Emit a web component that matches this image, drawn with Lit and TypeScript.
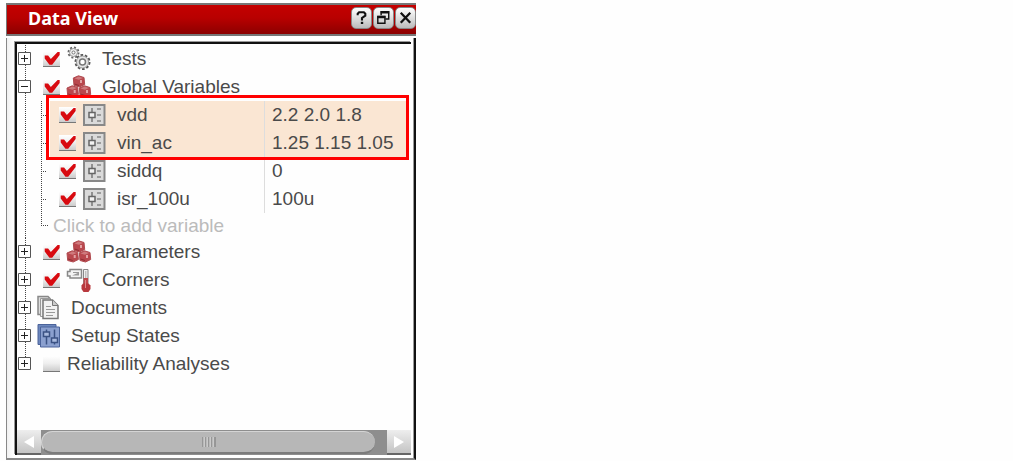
import { LitElement, html, svg, css, nothing } from "lit";
import { customElement, state } from "lit/decorators.js";
import { classMap } from "lit/directives/class-map.js";

interface TreeItem {
  id: string;
  label: string;
  icon?: "gears" | "cubes" | "corners" | "docs" | "states";
  checked?: boolean;
  last?: boolean;
}

interface Variable {
  name: string;
  value: string;
}

const swept: Variable[] = [
  { name: "vdd", value: "2.2 2.0 1.8" },
  { name: "vin_ac", value: "1.25 1.15 1.05" },
];

const fixed: Variable[] = [
  { name: "siddq", value: "0" },
  { name: "isr_100u", value: "100u" },
];

const cube = (x: number, y: number) => svg`
  <g transform="translate(${x} ${y})">
    <path d="M.8 3 6 .8 11.500 2.500l.7 7L7 12 1.500 10.500z" fill="#b9474d" stroke="#b04b50"/>
    <path d="M2 3.400 6.200 1.500l4.400 1.400-4.200 1.800z" fill="#cf7a7d"/>
    <path d="M8.500 5v3" stroke="#e3a3a5" stroke-width="2"/>
    <path d="M2 9l4.500 1.500" stroke="#8f2c32"/>
  </g>`;

const icons = {
  gears: () => html`<svg class="icon" width="26" height="26" viewBox="0 0 26 26" fill="none">
    <circle cx="7.500" cy="6.500" r="5" stroke="#666" stroke-width="2" stroke-dasharray="2 1.900"/>
    <circle cx="7.500" cy="6.500" r="4" fill="#eee" stroke="#999"/>
    <circle cx="7.500" cy="6.500" r="1.500" fill="#fff" stroke="#777"/>
    <circle cx="16.500" cy="16" r="7" stroke="#555" stroke-width="2" stroke-dasharray="2.600 1.800"/>
    <circle cx="16.500" cy="16" r="6" fill="#e4e4e4" stroke="#999"/>
    <circle cx="16.500" cy="16" r="3" fill="#fff" stroke="#777" stroke-width="1.500"/>
  </svg>`,
  cubes: () => html`<svg class="icon" width="26" height="26" viewBox="0 0 26 26" fill="none">
    ${cube(6.5, 1)}${cube(0.2, 11)}${cube(12.5, 11)}
  </svg>`,
  corners: () => html`<svg class="icon" width="26" height="26" viewBox="0 0 26 26" fill="none">
    <path d="M4 2.500h11.500v8.500H4V9H1.500V4.500H4z" fill="#f4f4f4" stroke="#888" stroke-width="1.500"/>
    <path d="M13 5.500v3H6z" fill="#999"/><path d="M7 5.500h6" stroke="#999"/>
    <path d="M17.500 2.500h4.500v15h-4.500z" fill="#f0f0f0" stroke="#888"/>
    <path d="M19.800 4v7" stroke="#aaa"/>
    <path d="M19.800 11v8" stroke="#c0484c" stroke-width="4.500"/>
    <path d="M17 16.500h5.500l2 2v3.500L22.500 25h-5l-2-3v-3.500z" fill="#b8383d"/>
    <path d="M19.500 13v8" stroke="#dd8a8c"/>
  </svg>`,
  docs: () => html`<svg class="icon" width="24" height="26" viewBox="0 0 24 26" fill="none">
    <path d="M1 1.500h10l2 2v16H1z" fill="#ddd" stroke="#888" stroke-width="1.500"/>
    <path d="M3.500 3.500h10v18h-10z" fill="#eee" stroke="#999"/>
    <path d="M6 5h9.500l5.500 5.500V23.500H6z" fill="#f2f2f2" stroke="#777" stroke-width="1.500"/>
    <path d="M15.500 5v5.500H21" fill="#ccc" stroke="#777"/>
    <path d="M9 11.500h5M9 14.500h9M9 17.500h9M9 20.500h7" stroke="#999"/>
  </svg>`,
  states: () => html`<svg class="icon" width="24" height="26" viewBox="0 0 24 26" fill="none">
    <path d="M1 1.500h18v20H1z" fill="#6c87bd" stroke="#4b639a"/>
    <path d="M3.500 4h19v20h-19z" fill="#8ba0cf" stroke="#4b639a"/>
    <path d="M9.500 6.500v15M17.500 6.500v15" stroke="#3b5284" stroke-width="1.500"/>
    <path d="M6.500 9h6v4.500h-6zM14.500 15h6v4.500h-6z" fill="#a9bade" stroke="#3b5284" stroke-width="1.500"/>
  </svg>`,
};

const slider = html`<svg class="icon" width="23" height="24" viewBox="0 0 23 24" fill="none">
  <path d="M1 2h20.500v20H1z" fill="#dadada" stroke="#888" stroke-width="2"/>
  <path d="M9 5v14" stroke="#777" stroke-width="1.500"/>
  <path d="M6 9.500h6v5H6z" fill="#f2f2f2" stroke="#666" stroke-width="1.500"/>
  <path d="M14 6h4M14 12h4M14 18h4" stroke="#888" stroke-width="1.500"/>
</svg>`;

@customElement("app-root")
export class DataView extends LitElement {
  @state() private open = true;

  static styles = css`
    :host {
      display: flex;
      min-height: 100vh;
      box-sizing: border-box;
      padding: 3px 6px 1px;
      background: #fefefe;
      color: #4a4a4a;
      font: 19px/28px "Liberation Sans", Arial, sans-serif;
    }
    * { box-sizing: border-box; }
    button {
      appearance: none;
      margin: 0;
      padding: 0;
      border: 0;
      background: none;
      color: inherit;
      font: inherit;
      text-align: left;
    }
    svg { display: block; flex: none; }
    .panel {
      flex: 0 1 410px;
      min-width: 0;
      display: flex;
      flex-direction: column;
    }
    .title {
      display: flex;
      align-items: center;
      gap: 1px;
      height: 33px;
      padding: 0 0 4px 21px;
      border: solid #777;
      border-width: 2px 0 2px 1px;
      background: linear-gradient(#c40000, #b80000 45%, #8c0000);
      color: #fff;
    }
    .title h1 {
      flex: 1;
      margin: 0;
      font: bold 18px/24px "Noto Sans", sans-serif;
    }
    .tool {
      display: grid;
      place-items: center;
      width: 21px;
      height: 22px;
      border: 1px solid #888;
      border-radius: 5px;
      background: linear-gradient(#fff, #d8d8d8 60%, #bbb);
    }
    .body {
      flex: 1;
      display: flex;
      margin-top: 2px;
      padding: 4px 3px 3px 8px;
      border: solid #888;
      border-width: 0 2px 2px 1px;
      border-right-color: #111;
      box-shadow: inset -1px 0 #999;
      background: linear-gradient(90deg, #f0f0f0, #fff 7px);
    }
    .view {
      flex: 1;
      min-width: 0;
      display: flex;
      flex-direction: column;
      border: solid #111;
      border-width: 2px 0 0 2px;
      box-shadow: -1px -1px #999;
      background: #fefefe;
    }
    .tree {
      flex: 1;
      padding: 1px 0 8px;
    }
    .row {
      display: flex;
      align-items: center;
      height: 28px;
      padding-left: 1px;
      white-space: nowrap;
      --dots: repeating-linear-gradient(#444 0 1px, #fff 1px 2px);
      --dash: repeating-linear-gradient(90deg, #444 0 1px, #fff 1px 2px);
      background: var(--dots) 8px 0 / 1px 100% no-repeat;
    }
    .row.last { background-size: 1px 50%; }
    .row.child {
      padding-left: 42px;
      background:
        var(--dots) 8px 0 / 1px 100% no-repeat,
        var(--dots) 24px 0 / 1px 100% no-repeat,
        var(--dash) 24px 14px / 6px 1px no-repeat;
    }
    .row.add {
      height: 25px;
      padding-left: 36px;
      background:
        var(--dots) 8px 0 / 1px 100% no-repeat,
        var(--dots) 24px 0 / 1px 13px no-repeat,
        var(--dash) 24px 12px / 8px 1px no-repeat;
      color: #bbb;
    }
    .swept {
      position: relative;
      background: linear-gradient(#fae6d3, #fae6d3) 33px 0 / calc(100% - 38px) 100% no-repeat;
    }
    .swept::after {
      content: "";
      position: absolute;
      inset: -6px 2px -3px 29px;
      border: 3px solid #f00;
      pointer-events: none;
    }
    .expander { width: 14px; height: 14px; }
    .check {
      appearance: none;
      flex: none;
      width: 17px;
      height: 16px;
      margin: 0 0 0 11px;
      border-bottom: 1px solid #777;
      background: linear-gradient(#fff, #eee 50%, #ccc);
    }
    .check:checked::before {
      content: "";
      display: block;
      height: 15px;
      background: #d80a10;
      clip-path: polygon(10% 30%, 30% 30%, 46% 54%, 86% 6%, 98% 6%, 98% 26%, 54% 92%, 38% 92%, 10% 50%);
    }
    .child .check { margin-left: 0; }
    .icon { margin-left: 6px; }
    .icon + .label { margin-left: 10px; }
    .check + .label { margin-left: 7px; }
    .child .icon { margin-left: 7px; }
    .child .icon + .label {
      flex: none;
      width: 158px;
      padding-left: 11px;
      margin-left: 0;
    }
    .bare .icon { margin-left: 5px; }
    .value {
      flex: 1;
      padding-left: 7px;
      border-left: 1px solid #ddd;
    }
    .scroll {
      display: grid;
      grid-template-columns: 24px 1fr 24px;
      height: 25px;
    }
    .step {
      display: grid;
      place-items: center;
      border-bottom: 2px solid #666;
      background: linear-gradient(#eee, #c4c4c4);
    }
    .track {
      padding: 1px 12px 1px 0;
      background: #8e8e8e;
    }
    .thumb {
      display: grid;
      place-items: center;
      width: 100%;
      height: 23px;
      border: solid #d4d4d4;
      border-width: 1px 0 0 1px;
      border-bottom: 2px solid #7c7c7c;
      border-radius: 12px;
      background: #b7b7b7;
    }
  `;

  private expander(name: string, open: boolean) {
    return html`<button class="expander" aria-label=${name} aria-expanded=${open}
      @click=${() => name === "Global Variables" && (this.open = !this.open)}>
      <svg width="14" height="14" viewBox="0 0 14 14" fill="#fff">
        <path d="M.5.5h12v12H.5z" stroke="#555"/>
        <path d=${open ? "M3 6.500h7" : "M3 6.500h7M6.500 3v7"} stroke="#222"/>
      </svg>
    </button>`;
  }

  private item(i: TreeItem, open = false) {
    const hasCheck = i.checked !== undefined;
    return html`<div class=${classMap({ row: true, bare: !hasCheck, last: !!i.last })}>
      ${this.expander(i.label, open)}
      ${hasCheck ? html`<input class="check" type="checkbox" id=${i.id} .checked=${i.checked!}>` : nothing}
      ${i.icon ? icons[i.icon]() : nothing}
      ${hasCheck
        ? html`<label class="label" for=${i.id}>${i.label}</label>`
        : html`<span class="label">${i.label}</span>`}
    </div>`;
  }

  private variable(v: Variable) {
    return html`<div class="row child">
      <input class="check" type="checkbox" id=${v.name} checked>
      ${slider}
      <label class="label" for=${v.name}>${v.name}</label>
      <span class="value">${v.value}</span>
    </div>`;
  }

  render() {
    return html`<section class="panel">
      <header class="title">
        <h1>Data View</h1>
        <button class="tool" aria-label="Help">
          <svg width="19" height="20" viewBox="0 0 20 20" fill="none">
            <path d="M6 7V5.500L7.500 4h5L14 5.500v2L10.500 10v2.500" stroke="#111" stroke-width="2.200"/>
            <path d="M9.300 14h2.500v2.300H9.300z" fill="#111"/>
          </svg>
        </button>
        <button class="tool" aria-label="Float">
          <svg width="19" height="20" viewBox="0 0 20 20" fill="none" stroke="#111">
            <path d="M7.500 7V3.500h8v7.500H12" stroke-width="1.500"/><path d="M7 4h9" stroke-width="2.500"/>
            <path d="M4 8.500h7.500v7H4z" stroke-width="1.500"/><path d="M3.500 9h8.500" stroke-width="2.500"/>
          </svg>
        </button>
        <button class="tool" aria-label="Close">
          <svg width="19" height="20" viewBox="0 0 20 20" fill="none">
            <path d="M5 4.500 15 15M15 4.500 5 15" stroke="#111" stroke-width="2.400"/>
          </svg>
        </button>
      </header>
      <div class="body">
        <div class="view">
          <div class="tree">
            ${this.item({ id: "tests", label: "Tests", icon: "gears", checked: true })}
            ${this.item({ id: "globals", label: "Global Variables", icon: "cubes", checked: true }, this.open)}
            ${this.open
              ? html`<div class="swept">${swept.map((v) => this.variable(v))}</div>
                  ${fixed.map((v) => this.variable(v))}
                  <div class="row add"><button>Click to add variable</button></div>`
              : nothing}
            ${this.item({ id: "params", label: "Parameters", icon: "cubes", checked: true })}
            ${this.item({ id: "corners", label: "Corners", icon: "corners", checked: true })}
            ${this.item({ id: "docs", label: "Documents", icon: "docs" })}
            ${this.item({ id: "states", label: "Setup States", icon: "states" })}
            ${this.item({ id: "rel", label: "Reliability Analyses", checked: false, last: true })}
          </div>
          <div class="scroll">
            <button class="step" aria-label="Scroll left">
              <svg width="12" height="12" viewBox="0 0 12 12"><path d="M11 0v12L1 6z" fill="#fff"/></svg>
            </button>
            <div class="track">
              <button class="thumb" aria-label="Scroll position">
                <svg width="14" height="10" viewBox="0 0 14 10">
                  <path d="M1 0v10M4 0v10M7 0v10M10 0v10M13 0v10" stroke="#777"/>
                  <path d="M2 0v10M5 0v10M8 0v10M11 0v10" stroke="#ddd"/>
                </svg>
              </button>
            </div>
            <button class="step" aria-label="Scroll right">
              <svg width="12" height="12" viewBox="0 0 12 12"><path d="M1 0v12l10-6z" fill="#fff"/></svg>
            </button>
          </div>
        </div>
      </div>
    </section>`;
  }
}
